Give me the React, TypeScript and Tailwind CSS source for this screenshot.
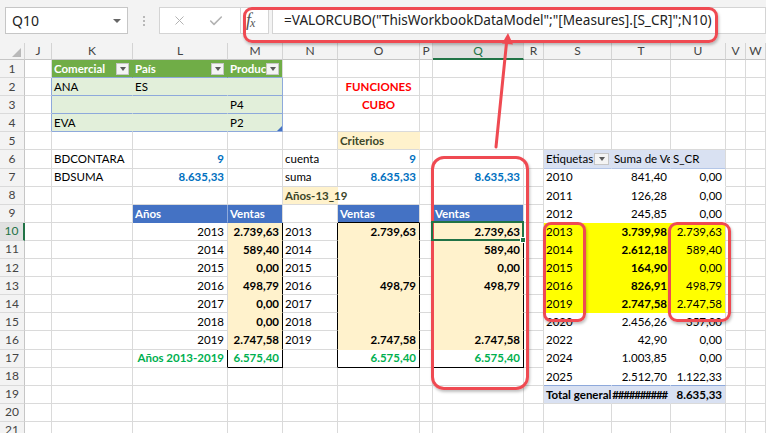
import { X, Check } from 'lucide-react'

type Cell = {
  t?: string
  a?: 'l' | 'r' | 'c'
  cls?: string
  bg?: string
  r?: string
  b?: string
  ov?: boolean
  btn?: boolean
  sel?: boolean
  grip?: boolean
}

const COLS = ['J', 'K', 'L', 'M', 'N', 'O', 'P', 'Q', 'R', 'S', 'T', 'U', 'V', 'W']
const ROWS = Array.from({ length: 21 }, (_, i) => i + 1)

const cells: Record<string, Cell> = {}
function set(key: string, c: Cell) {
  cells[key] = { ...cells[key], ...c }
}

// tabla de criterios K1:M4
;[['K', 'Comercial'], ['L', 'País'], ['M', 'Producto']].forEach(([col, t]) => {
  set(col + '1', {
    t,
    cls: 'text-white font-bold',
    bg: 'bg-[#70ad47]',
    r: col === 'M' ? undefined : 'border-r-[#70ad47]',
    b: 'border-b-[#8ea9db]',
    btn: true,
  })
})
for (let row = 2; row <= 4; row++) {
  set('J' + row, { r: 'border-r-[#8ea9db]' })
  for (const col of ['K', 'L', 'M']) {
    set(col + row, {
      bg: 'bg-[#e2efda]',
      r: col === 'M' ? 'border-r-[#8ea9db]' : 'border-r-[#e2efda]',
      b: 'border-b-[#8ea9db]',
    })
  }
}
set('K2', { t: 'ANA' })
set('L2', { t: 'ES' })
set('M3', { t: 'P4' })
set('K4', { t: 'EVA' })
set('M4', { t: 'P2', grip: true })

const red = 'text-[#ff0000] font-bold'
const blue = 'text-[#0070c0] font-bold'
const green = 'text-[#00b050] font-bold'
const note = 'font-bold text-[#3c4628]'

set('O2', { t: 'FUNCIONES', a: 'c', cls: red })
set('O3', { t: 'CUBO', a: 'c', cls: red })
set('O5', { t: 'Criterios', bg: 'bg-[#fff2cc]', r: 'border-r-[#fff2cc]', cls: note })

set('K6', { t: 'BDCONTARA' })
set('L6', { t: '9', a: 'r', cls: blue })
set('N6', { t: 'cuenta' })
set('O6', { t: '9', a: 'r', cls: blue })
set('K7', { t: 'BDSUMA' })
set('L7', { t: '8.635,33', a: 'r', cls: blue })
set('N7', { t: 'suma' })
set('O7', { t: '8.635,33', a: 'r', cls: blue })
set('Q7', { t: '8.635,33', a: 'r', cls: blue })
set('N8', { t: 'Años-13_19', bg: 'bg-[#fff2cc]', r: 'border-r-[#fff2cc]', ov: true, cls: note })

const head = 'text-white font-bold'
set('L9', { t: 'Años', bg: 'bg-[#4472c4]', cls: head, r: 'border-r-[#8faadc]', b: 'border-b-[#4472c4]' })
set('M9', { t: 'Ventas', bg: 'bg-[#4472c4]', cls: head, b: 'border-b-[#4472c4]' })
set('O9', { t: 'Ventas', bg: 'bg-[#4472c4]', cls: head, b: 'border-b-black' })
set('Q9', { t: 'Ventas', bg: 'bg-[#4472c4]', cls: head, b: 'border-b-black' })

const m = ['2.739,63', '589,40', '0,00', '498,79', '0,00', '0,00', '2.747,58']
const o = ['2.739,63', '', '', '498,79', '', '', '2.747,58']
const q = ['2.739,63', '589,40', '0,00', '498,79', '', '', '2.747,58']
for (let i = 0; i < 7; i++) {
  const row = 10 + i
  const year = String(2013 + i)
  const val = { a: 'r' as const, bg: 'bg-[#fff2cc]', cls: 'font-bold', r: 'border-r-black', b: 'border-b-[#fff2cc]' }
  set('L' + row, { t: year, a: 'r' })
  set('M' + row, { t: m[i], ...val })
  set('N' + row, { t: year, r: 'border-r-black' })
  set('O' + row, { t: o[i], ...val })
  set('P' + row, { r: 'border-r-black' })
  set('Q' + row, { t: q[i], ...val, sel: i === 0, ov: i === 0 })
}
set('L17', { t: 'Años 2013-2019', a: 'r', cls: green, r: 'border-r-black' })
set('M17', { t: '6.575,40', a: 'r', cls: green, r: 'border-r-black', b: 'border-b-black' })
set('N17', { r: 'border-r-black' })
set('O17', { t: '6.575,40', a: 'r', cls: green, r: 'border-r-black', b: 'border-b-black' })
set('P17', { r: 'border-r-black' })
set('Q17', { t: '6.575,40', a: 'r', cls: green, r: 'border-r-black', b: 'border-b-black' })

// tabla dinámica S6:U19
set('S6', { t: 'Etiquetas de fila', bg: 'bg-[#d9e1f2]', r: 'border-r-[#d9e1f2]', b: 'border-b-[#b4c6e7]', btn: true })
set('T6', { t: 'Suma de Ventas', bg: 'bg-[#d9e1f2]', r: 'border-r-[#d9e1f2]', b: 'border-b-[#b4c6e7]' })
set('U6', { t: 'S_CR', bg: 'bg-[#d9e1f2]', b: 'border-b-[#b4c6e7]' })

const pivot = [
  ['2010', '841,40', '0,00'],
  ['2011', '126,28', '0,00'],
  ['2012', '245,85', '0,00'],
  ['2013', '3.739,98', '2.739,63'],
  ['2014', '2.612,18', '589,40'],
  ['2015', '164,90', '0,00'],
  ['2016', '826,91', '498,79'],
  ['2019', '2.747,58', '2.747,58'],
  ['2020', '2.456,26', '357,00'],
  ['2022', '42,90', '0,00'],
  ['2024', '1.003,85', '0,00'],
  ['2025', '2.512,70', '1.122,33'],
]
pivot.forEach(([y, v, s], i) => {
  const row = 7 + i
  const yellow = row >= 10 && row <= 14
  const bg = yellow ? 'bg-[#ffff00]' : 'bg-white'
  const r = yellow ? 'border-r-[#ffff00]' : 'border-r-white'
  const b = yellow ? 'border-b-[#ffff00]' : row === 18 ? 'border-b-[#8ea9db]' : 'border-b-white'
  set('S' + row, { t: y, bg, r, b })
  set('T' + row, { t: v, a: 'r', bg, r, b, cls: yellow ? 'font-bold' : '' })
  set('U' + row, { t: s, a: 'r', bg, b })
})
set('S19', { t: 'Total general', bg: 'bg-[#d9e1f2]', r: 'border-r-[#d9e1f2]', cls: 'font-bold' })
set('T19', { t: '##########', a: 'r', bg: 'bg-[#d9e1f2]', r: 'border-r-[#d9e1f2]', cls: 'font-bold tracking-[-1.2px]' })
set('U19', { t: '8.635,33', a: 'r', bg: 'bg-[#d9e1f2]', cls: 'font-bold' })

function FilterButton({ pivot }: { pivot?: boolean }) {
  return (
    <span
      className={`absolute top-1/2 -translate-y-1/2 flex items-center justify-center bg-[#f4f4f4] border border-[#c6c6c6] ${
        pivot ? 'right-[2px] w-[15px] h-[12px]' : 'right-[3px] w-[13px] h-[12px]'
      }`}
    >
      <span className="w-0 h-0 border-l-[3.5px] border-r-[3.5px] border-t-[4px] border-l-transparent border-r-transparent border-t-[#5a5a5a]" />
    </span>
  )
}

function SheetCell({ col, row }: { col: string; row: number }) {
  const c = cells[col + row] ?? {}
  const align =
    c.a === 'r' ? 'justify-end pr-[3px]' : c.a === 'c' ? 'justify-center' : 'justify-start pl-[2px]'
  return (
    <div
      className={`relative flex items-center h-[18.1px] border-r border-b whitespace-nowrap ${
        c.r ?? 'border-r-[#dadada]'
      } ${c.b ?? 'border-b-[#dadada]'} ${c.bg ?? ''} ${c.ov ? '' : 'overflow-hidden'} ${align} ${c.cls ?? ''}`}
    >
      {c.t}
      {c.btn && <FilterButton pivot={col === 'S'} />}
      {c.grip && (
        <svg className="absolute right-0 bottom-0" width="5" height="5" viewBox="0 0 5 5">
          <path d="M5 0 L5 5 L0 5 Z" fill="#4472c4" />
        </svg>
      )}
      {c.sel && (
        <div className="absolute -left-[2px] -top-[2px] -right-[1px] -bottom-[1px] border-2 border-[#217346] z-10 pointer-events-none">
          <div className="absolute -right-[4px] -bottom-[4px] w-[6px] h-[6px] bg-[#217346] border border-white" />
        </div>
      )}
    </div>
  )
}

export default function App() {
  return (
    <div className="relative w-[766px] h-[433px] overflow-hidden bg-white font-['Lato',sans-serif] text-[11.5px] text-black">
      {/* barra de fórmulas */}
      <div className="h-[43px] bg-[#f3f3f3] flex items-start pt-[7px] font-['Noto_Sans',sans-serif]">
        <div className="ml-[5px] w-[123px] h-[27px] bg-white border border-[#c6c6c6] flex items-center pl-[6px] text-[14px] text-[#222]">
          Q10
          <span className="ml-auto mr-[6px] w-0 h-0 border-l-[4px] border-r-[4px] border-t-[4px] border-l-transparent border-r-transparent border-t-[#666]" />
        </div>
        <div className="w-[31px] h-[27px] flex flex-col items-center justify-center gap-[2px]">
          <span className="w-[2px] h-[2px] bg-[#b8b8b8]" />
          <span className="w-[2px] h-[2px] bg-[#b8b8b8]" />
          <span className="w-[2px] h-[2px] bg-[#b8b8b8]" />
        </div>
        <div className="w-[82px] h-[27px] bg-white border border-[#d4d4d4] flex items-center">
          <X className="ml-[12px] text-[#b3b3b3]" size={15} strokeWidth={1.6} />
          <Check className="ml-[21px] text-[#b3b3b3]" size={16} strokeWidth={2.4} />
        </div>
        <div className="w-[28px] h-[27px] bg-white border border-l-0 border-[#d4d4d4] flex items-center pl-[5px] font-['Liberation_Serif',serif] italic text-[18px] text-[#555]">
          f<span className="text-[12px] mt-[5px] -ml-[1px]">x</span>
        </div>
        <div className="ml-[3px] flex-1 h-[27px] bg-white border border-[#d4d4d4] flex items-center pl-[11px] text-[13.6px] text-[#222] whitespace-nowrap">
          =VALORCUBO("ThisWorkbookDataModel";"[Measures].[S_CR]";N10)
        </div>
      </div>

      {/* hoja */}
      <div className="grid grid-cols-[25px_27px_81px_95px_55px_55px_82px_13px_91px_20px_68px_59px_55px_20px_20px]">
        <div className="relative h-[17px] bg-[#f3f3f3] border-r border-b border-r-[#d4d4d4] border-b-[#c6c6c6]">
          <svg className="absolute right-[3px] bottom-[2px]" width="9" height="9" viewBox="0 0 9 9">
            <path d="M9 0 L9 9 L0 9 Z" fill="#b9b9b9" />
          </svg>
        </div>
        {COLS.map((col) => (
          <div
            key={col}
            className={`h-[17px] flex items-center justify-center text-[12px] border-r border-r-[#d4d4d4] ${
              col === 'Q'
                ? 'bg-[#e1e1e1] text-[#217346] border-b-2 border-b-[#217346]'
                : 'bg-[#f3f3f3] text-[#444] border-b border-b-[#c6c6c6]'
            }`}
          >
            {col}
          </div>
        ))}
        {ROWS.map((row) => [
          <div
            key={'h' + row}
            className={`h-[18.1px] flex items-center justify-center text-[12px] border-b border-b-[#dadada] ${
              row === 10
                ? 'bg-[#e1e1e1] text-[#217346] border-r-2 border-r-[#217346]'
                : 'bg-[#f3f3f3] text-[#444] border-r border-r-[#c6c6c6]'
            }`}
          >
            {row}
          </div>,
          ...COLS.map((col) => <SheetCell key={col + row} col={col} row={row} />),
        ])}
      </div>

      {/* anotaciones */}
      <div className="absolute left-[243px] top-[7px] w-[475px] h-[36px] rounded-[9px] border-[3px] border-[#ef4a52] shadow-[1px_2px_3px_rgba(0,0,0,0.25)] pointer-events-none" />
      <div className="absolute left-[431px] top-[156px] w-[98px] h-[234px] rounded-[13px] border-[3px] border-[#ef4a52] shadow-[1px_2px_3px_rgba(0,0,0,0.25)] pointer-events-none" />
      <div className="absolute left-[543px] top-[222px] w-[43px] h-[100px] rounded-[8px] border-[3px] border-[#ef4a52] shadow-[1px_2px_3px_rgba(0,0,0,0.25)] pointer-events-none" />
      <div className="absolute left-[668px] top-[222px] w-[63px] h-[100px] rounded-[9px] border-[3px] border-[#ef4a52] shadow-[1px_2px_3px_rgba(0,0,0,0.25)] pointer-events-none" />
      <svg className="absolute left-0 top-0 pointer-events-none" width="766" height="433">
        <line x1="496" y1="147" x2="506.6" y2="42" stroke="#ef4a52" strokeWidth="3" strokeLinecap="round" />
        <path d="M508 33 L513 44.5 L502 43.5 Z" fill="#ef4a52" />
      </svg>
    </div>
  )
}
